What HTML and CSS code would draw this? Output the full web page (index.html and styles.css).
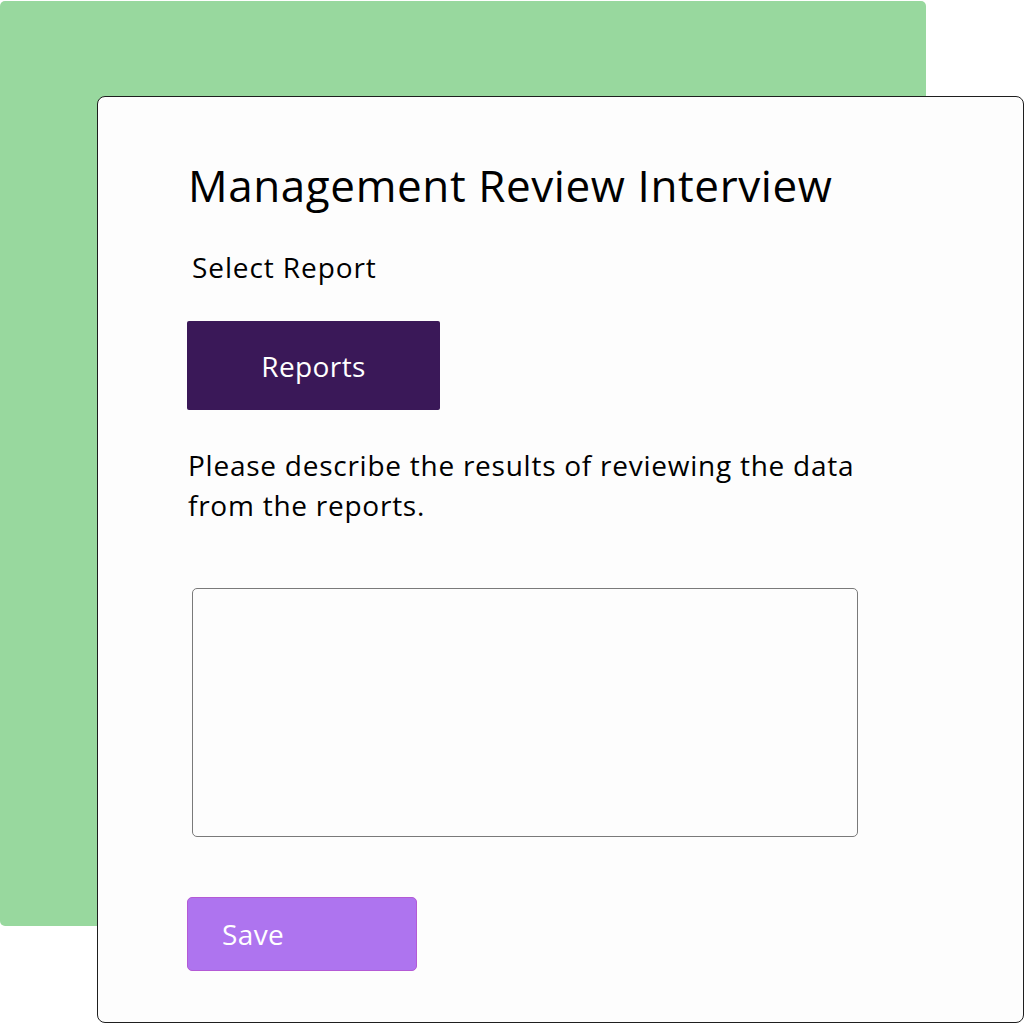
FILE: index.html
```html
<!DOCTYPE html>
<html lang="en">
<head>
    <meta charset="UTF-8">
    <meta name="viewport" content="width=device-width, initial-scale=1.0">
    <title>Management Review Interview</title>
    <link rel="stylesheet" href="styles.css">
</head>
<body>
    <div class="stage">
        <div class="backdrop"></div>
        <div class="review-card">
            <h1>Management Review Interview</h1>
            <label class="select-label">Select Report</label>
            <button type="button" class="reports-button">Reports</button>
            <p class="prompt">Please describe the results of reviewing the data from the reports.</p>
            <textarea class="results-input"></textarea>
            <button type="button" class="save-button">Save</button>
        </div>
    </div>
</body>
</html>
```

FILE: styles.css
```css
body {
    margin: 0;
    background-color: #ffffff;
    font-family: "Open Sans", Arial, sans-serif;
    color: #000000;
}

.stage {
    display: grid;
    width: 1024px;
    height: 1024px;
}

.backdrop {
    grid-area: 1 / 1;
    width: 926px;
    height: 925px;
    margin-top: 1px;
    background-color: #98d89e;
    border-radius: 5px;
}

.review-card {
    grid-area: 1 / 1;
    box-sizing: border-box;
    width: 927px;
    height: 927px;
    margin: 96px 0 0 97px;
    padding: 48px 0 0 89px;
    background-color: #fdfdfd;
    border: 1.5px solid #1e1e1e;
    border-radius: 8px;
    display: flex;
    flex-direction: column;
    align-items: flex-start;
}

h1 {
    margin: 0 0 0 1px;
    font-size: 44px;
    font-weight: 400;
    letter-spacing: 0.6px;
    line-height: 80px;
}

.select-label {
    margin: 23px 0 0 5px;
    font-size: 28px;
    letter-spacing: 0.9px;
    line-height: 38px;
}

.reports-button {
    margin-top: 35px;
    width: 253px;
    height: 89px;
    padding-right: 6px;
    background-color: #3a1858;
    color: #ffffff;
    border: none;
    border-radius: 2px;
    font-family: inherit;
    font-size: 28px;
    letter-spacing: 0.4px;
}

.prompt {
    margin: 35px 0 0 1px;
    width: 690px;
    font-size: 28px;
    letter-spacing: 0.75px;
    line-height: 40px;
}

.results-input {
    box-sizing: border-box;
    margin: 63px 0 0 5px;
    width: 666px;
    height: 249px;
    border: 1px solid #7a7a7a;
    border-radius: 5px;
    background-color: #fdfdfd;
    resize: none;
}

.save-button {
    box-sizing: border-box;
    margin-top: 60px;
    width: 230px;
    height: 74px;
    padding-left: 34px;
    text-align: left;
    background-color: #ae74ef;
    color: #ffffff;
    border: 1px solid #b45ad6;
    border-radius: 5px;
    font-family: inherit;
    font-size: 28px;
    letter-spacing: 0.4px;
}
```
